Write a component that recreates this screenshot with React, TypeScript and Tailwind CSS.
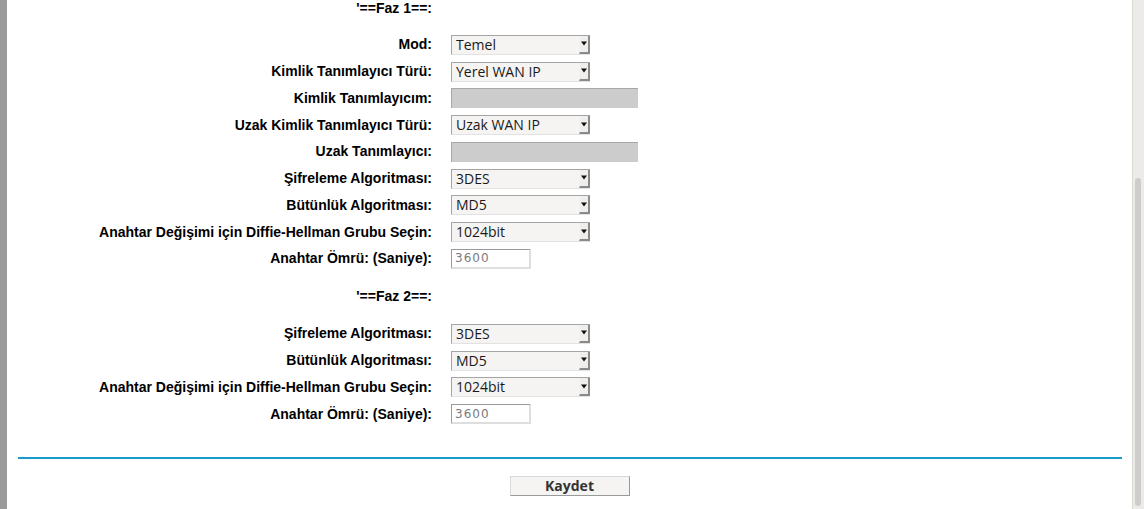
import React from "react";

const labelFont = { fontFamily: '"Liberation Sans", Arial, sans-serif' };

function Arrow() {
  return (
    <div className="flex h-full w-[11px] items-center justify-center border-l border-l-[#f2f2f2] border-r-2 border-b-2 border-r-[#8a8a8a] border-b-[#8a8a8a] bg-[#efeeec]">
      <svg width="6" height="5" viewBox="0 0 6 5">
        <path d="M0 0.5 H6 L3 4.5 Z" fill="#111" />
      </svg>
    </div>
  );
}

function Select({ value }: { value: string }) {
  return (
    <div className="flex h-5 w-[139px] items-stretch border-t border-l border-t-[#a5a5a5] border-l-[#a5a5a5] border-b border-b-[#e2e2e2] bg-[#f5f4f2]">
      <div
        className="flex flex-1 items-center pl-[4px] text-[14px] leading-none text-[#1a1a1a]"
        style={{ fontFamily: '"Open Sans", "DejaVu Sans", sans-serif' }}
      >
        {value}
      </div>
      <Arrow />
    </div>
  );
}

function Disabled() {
  return <div className="h-5 w-[187px] border-t border-l border-t-[#a8a8a8] border-l-[#a8a8a8] bg-[#cccccc]" />;
}

function Num() {
  return (
    <div
      className="flex h-5 w-[80px] items-center border-t border-l border-t-[#9a9a9a] border-l-[#9a9a9a] border-b-2 border-r-2 border-b-[#dedede] border-r-[#dedede] bg-white pl-[3px] text-[12px] tracking-[1px] text-[#7a7a7a]"
      style={{ fontFamily: '"DejaVu Sans", sans-serif' }}
    >
      3600
    </div>
  );
}

type Row = { label: string; control: React.ReactNode };

function Rows({ rows }: { rows: Row[] }) {
  return (
    <div className="grid grid-cols-[425px_1fr] gap-x-[19px]">
      {rows.map((r, i) => (
        <React.Fragment key={i}>
          <div
            className="flex h-[26.75px] items-center justify-end text-[14px] font-bold text-black"
            style={labelFont}
          >
            {r.label}
          </div>
          <div className="flex h-[26.75px] items-center">{r.control}</div>
        </React.Fragment>
      ))}
    </div>
  );
}

function Heading({ text }: { text: string }) {
  return (
    <div className="grid grid-cols-[425px_1fr] gap-x-[19px]">
      <div
        className="flex h-4 items-center justify-end text-[14px] font-bold text-black"
        style={labelFont}
      >
        {text}
      </div>
      <div />
    </div>
  );
}

export default function App() {
  const faz1: Row[] = [
    { label: "Mod:", control: <Select value="Temel" /> },
    { label: "Kimlik Tanımlayıcı Türü:", control: <Select value="Yerel WAN IP" /> },
    { label: "Kimlik Tanımlayıcım:", control: <Disabled /> },
    { label: "Uzak Kimlik Tanımlayıcı Türü:", control: <Select value="Uzak WAN IP" /> },
    { label: "Uzak Tanımlayıcı:", control: <Disabled /> },
    { label: "Şifreleme Algoritması:", control: <Select value="3DES" /> },
    { label: "Bütünlük Algoritması:", control: <Select value="MD5" /> },
    { label: "Anahtar Değişimi için Diffie-Hellman Grubu Seçin:", control: <Select value="1024bit" /> },
    { label: "Anahtar Ömrü: (Saniye):", control: <Num /> },
  ];
  const faz2: Row[] = [
    { label: "Şifreleme Algoritması:", control: <Select value="3DES" /> },
    { label: "Bütünlük Algoritması:", control: <Select value="MD5" /> },
    { label: "Anahtar Değişimi için Diffie-Hellman Grubu Seçin:", control: <Select value="1024bit" /> },
    { label: "Anahtar Ömrü: (Saniye):", control: <Num /> },
  ];
  return (
    <div className="flex h-[509px] w-[1144px] overflow-hidden bg-white">
      <div className="w-[7px] shrink-0 bg-[#9a9a9a]" />
      <div className="flex flex-1 flex-col">
        <Heading text="'==Faz 1==:" />
        <div className="mt-[15.6px]">
          <Rows rows={faz1} />
        </div>
        <div className="mt-[16.6px]">
          <Heading text="'==Faz 2==:" />
        </div>
        <div className="mt-[15.6px]">
          <Rows rows={faz2} />
        </div>
        <div className="ml-[11px] mr-[10px] mt-[29.4px] h-[2px] bg-[#1c9ac9]" />
        <div className="mt-[17px] flex justify-center">
          <button
            className="h-5 w-[120px] border border-t-[#d8d8d8] border-l-[#d8d8d8] border-b-[#9a9a9a] border-r-[#9a9a9a] bg-[#f5f4f2] text-[14px] font-bold leading-none text-[#333]"
            style={{ fontFamily: '"Open Sans", "DejaVu Sans", sans-serif' }}
          >
            Kaydet
          </button>
        </div>
      </div>
      <div className="flex w-[12px] shrink-0 flex-col border-l border-l-[#dcd8d4] bg-[#edebe9] pl-[2px] pr-[2px]">
        <div className="mt-[178px] h-[328px] w-[6px] rounded-full bg-[#cdcdcd]" />
      </div>
    </div>
  );
}
